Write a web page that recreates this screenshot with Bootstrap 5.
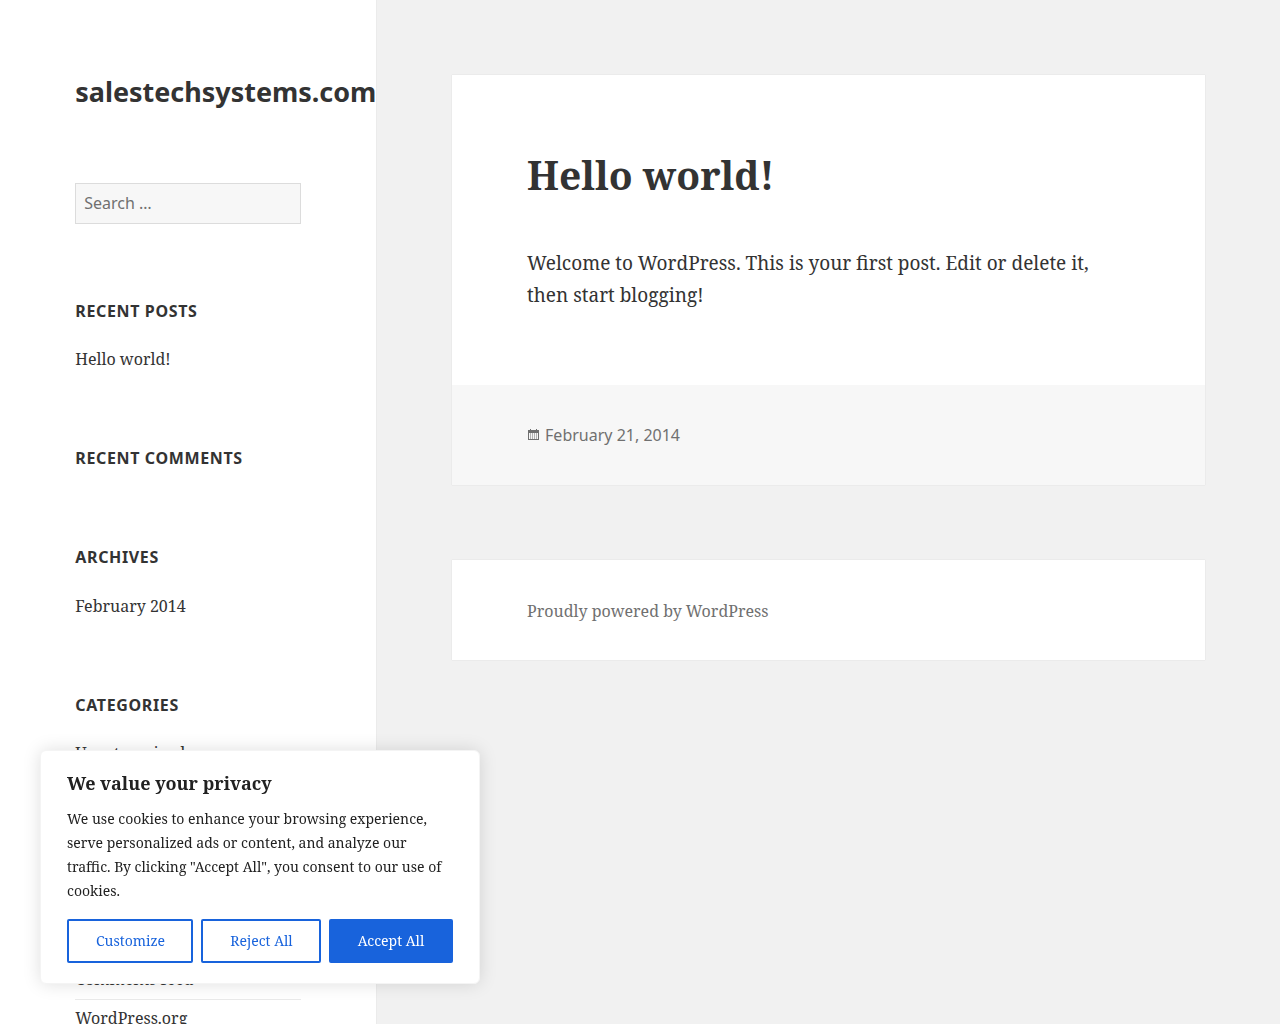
<!DOCTYPE html>
<html lang="en">
<head>
<meta charset="utf-8">
<title>salestechsystems.com</title>
<link href="https://cdn.jsdelivr.net/npm/bootstrap@5.3.0/dist/css/bootstrap.min.css" rel="stylesheet">
<style>
:root { --serif: "Noto Serif", "DejaVu Serif", serif; --sans: "Noto Sans", sans-serif; }
html, body { height: 100%; overflow: hidden; }
body { background: #f1f1f1; color: #333; font-family: var(--serif); }
.page-shell { height: 1024px; overflow: hidden; }
.side-col { width: 376.47px; flex: none; background: #fff; box-shadow: 0 0 1px rgba(0,0,0,.15); padding: 0 0 0 75.3px; height: 1200px; }
.site-name { font-family: var(--sans); font-weight: 700; font-size: 26.95px; line-height: 38px; color: #333; padding-top: 73px; margin: 0; white-space: nowrap; }
.search-box { width: 226px; height: 41px; margin-top: 72px; background: #f7f7f7; border: 1px solid #dcdcdc; border-radius: 0; font-family: var(--sans); font-size: 16px; color: #707070; padding: 0 8px 2px; }
.search-box::placeholder { color: #707070; opacity: 1; }
.widget-block { width: 226px; margin-top: 67.2px; }
.widget-block.first-block { margin-top: 75px; }
.widget-block.empty-block { margin-bottom: 75px; }
.widget-head { font-family: var(--sans); font-weight: 700; font-size: 16px; letter-spacing: .64px; line-height: 24px; text-transform: uppercase; color: #333; margin: 0 0 17px; }
.widget-head.head-wide { margin-bottom: 18px; }
.empty-block .widget-head { margin-bottom: 0; }
.widget-item { font-size: 16px; line-height: 24px; padding: 7.2px 0 7.5px; color: #333; }
.widget-item + .widget-item { border-top: 1px solid #eaeaea; }
.widget-item + .widget-item:last-child { padding-top: 6.5px; }
.main-col { padding: 75px 75.3px 0; flex: 1; min-width: 0; }
.post-box { background: #fff; box-shadow: 0 0 1px rgba(0,0,0,.15); }
.post-body { padding: 74px 75.3px 0; height: 310px; }
.post-title { font-family: var(--serif); font-weight: 700; font-size: 39px; line-height: 52px; color: #333; margin: 0 0 46px; }
.post-text { font-size: 19px; line-height: 32px; margin: 0; color: #333; }
.post-foot { background: #f7f7f7; height: 100px; padding: 0 75.3px; font-family: var(--sans); font-size: 16px; color: #707070; gap: 5px; }
.foot-box { background: #fff; box-shadow: 0 0 1px rgba(0,0,0,.15); margin-top: 75px; height: 100px; padding: 2px 75.3px 0; font-size: 16px; color: #707070; }
.cookie-card { position: fixed; left: 40px; bottom: 40px; width: 440px; height: 234px; background: #fff; border: 1px solid #f4f4f4; border-radius: 6px; box-shadow: 0 0 18px rgba(0,0,0,.13); padding: 20px 26px 0; z-index: 10; }
.cookie-title { font-family: var(--serif); font-weight: 700; font-size: 18px; line-height: 24px; color: #212121; margin: 0 0 12px; }
.cookie-text { font-size: 14px; line-height: 24px; color: #212121; margin: 0 0 16px; }
.cookie-btn { height: 44px; font-family: var(--serif); font-size: 14px; line-height: 1; border: 2px solid #1863dc; border-radius: 2px; padding: 0; color: #1863dc; background: #fff; }
.cookie-btn:hover { color: #1863dc; background: #fff; border-color: #1863dc; }
.cookie-btn.solid, .cookie-btn.solid:hover { color: #fff; background: #1863dc; }
.btn-a { width: 126px; padding-left: 1px; } .btn-b { width: 120px; padding-left: 1px; } .btn-c { width: 124px; }
</style>
</head>
<body>
<div class="page-shell d-flex">
  <aside class="side-col">
    <h1 class="site-name">salestechsystems.com</h1>
    <input class="search-box d-block" type="search" placeholder="Search …" aria-label="Search">
    <div class="widget-block first-block">
      <h2 class="widget-head">Recent Posts</h2>
      <div class="widget-item">Hello world!</div>
    </div>
    <div class="widget-block empty-block">
      <h2 class="widget-head">Recent Comments</h2>
    </div>
    <div class="widget-block first-block">
      <h2 class="widget-head head-wide">Archives</h2>
      <div class="widget-item">February 2014</div>
    </div>
    <div class="widget-block">
      <h2 class="widget-head">Categories</h2>
      <div class="widget-item">Uncategorized</div>
    </div>
    <div class="widget-block">
      <h2 class="widget-head">Meta</h2>
      <div class="widget-item">Log in</div>
      <div class="widget-item">Entries feed</div>
      <div class="widget-item">Comments feed</div>
      <div class="widget-item">WordPress.org</div>
    </div>
  </aside>
  <main class="main-col">
    <article class="post-box">
      <div class="post-body">
        <h2 class="post-title">Hello world!</h2>
        <p class="post-text">Welcome to WordPress. This is your first post. Edit or delete it, then start blogging!</p>
      </div>
      <div class="post-foot d-flex align-items-center">
        <svg width="13" height="13" viewBox="0 1 13 13" aria-hidden="true"><path fill="#707070" d="M1 2h2V1h1v1h5V1h1v1h2v10H1zm1 3v6h9V5z"/><path fill="#707070" d="M3 5.5h1v1H3zm2 0h1v1H5zm2 0h1v1H7zm2 0h1v1H9zM3 7.5h1v1H3zm2 0h1v1H5zm2 0h1v1H7zm2 0h1v1H9zM3 9.5h1v1H3zm2 0h1v1H5zm2 0h1v1H7zm2 0h1v1H9z"/></svg>
        <span>February 21, 2014</span>
      </div>
    </article>
    <footer class="foot-box d-flex align-items-center">Proudly powered by WordPress</footer>
  </main>
</div>
<div class="cookie-card">
  <p class="cookie-title">We value your privacy</p>
  <p class="cookie-text">We use cookies to enhance your browsing experience, serve personalized ads or content, and analyze our traffic. By clicking "Accept All", you consent to our use of cookies.</p>
  <div class="d-flex gap-2">
    <button type="button" class="btn cookie-btn btn-a">Customize</button>
    <button type="button" class="btn cookie-btn btn-b">Reject All</button>
    <button type="button" class="btn cookie-btn solid btn-c">Accept All</button>
  </div>
</div>
<script src="https://cdn.jsdelivr.net/npm/bootstrap@5.3.0/dist/js/bootstrap.bundle.min.js"></script>
</body>
</html>
